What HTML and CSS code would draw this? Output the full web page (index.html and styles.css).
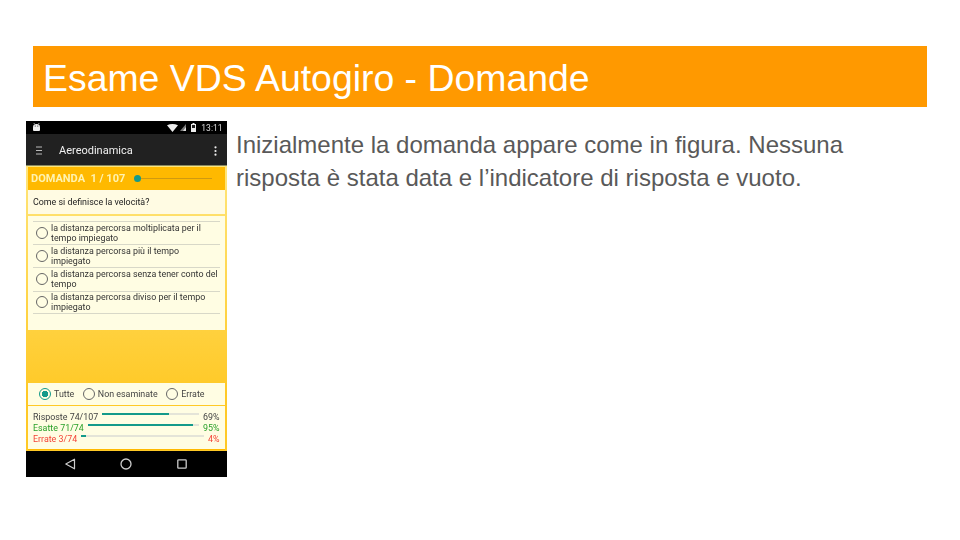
FILE: index.html
```html
<!DOCTYPE html>
<html lang="it">
<head>
    <meta charset="UTF-8">
    <title>Esame VDS Autogiro - Domande</title>
    <link rel="stylesheet" href="styles.css">
</head>
<body>
    <div class="slide">
        <h1 class="title">Esame VDS Autogiro - Domande</h1>
        <div class="content">
            <!-- schermata del telefono -->
            <div class="phone">
                <div class="status">
                    <svg class="android" width="9" height="9" viewBox="0 0 9 9"><path d="M1 4.2a3.5 3.2 0 0 1 7 0V7a1 1 0 0 1-1 1H2a1 1 0 0 1-1-1z" fill="#eee"/><path d="M2.5 1 1.8 0M6.5 1l.7-1" stroke="#eee" stroke-width=".7"/><circle cx="3.2" cy="3" r=".5" fill="#000"/><circle cx="5.8" cy="3" r=".5" fill="#000"/></svg>
                    <div class="status-right">
                        <svg width="11" height="8" viewBox="0 0 11 8"><path d="M0 1.2Q5.5-1.2 11 1.2L5.5 8z" fill="#eee"/></svg>
                        <svg width="6" height="7" viewBox="0 0 6 7"><path d="M6 0v7H0z" fill="#777"/><path d="M6 3v4H3z" fill="#ddd"/></svg>
                        <svg class="battery" width="5" height="9" viewBox="0 0 5 9"><path d="M1.500 0h2v1H5v8H0V1h1.500z" fill="#eee"/><rect x="1" y="2" width="3" height="3" fill="#222"/></svg>
                        <span class="clock">13:11</span>
                    </div>
                </div>
                <div class="toolbar">
                    <svg class="burger" width="6" height="9" viewBox="0 0 6 9"><path d="M0 1h6M0 4.500h6M0 8h6" stroke="#bbb" stroke-width="1"/></svg>
                    <span class="toolbar-title">Aereodinamica</span>
                    <svg class="dots" width="3" height="10" viewBox="0 0 3 10"><circle cx="1.500" cy="1.300" r="1.100" fill="#eee"/><circle cx="1.500" cy="5" r="1.100" fill="#eee"/><circle cx="1.500" cy="8.700" r="1.100" fill="#eee"/></svg>
                </div>
                <div class="app">
                    <div class="quiz-head">
                        <span class="quiz-label">DOMANDA&nbsp; 1 / 107</span>
                        <div class="quiz-slider"><span class="quiz-knob"></span></div>
                    </div>
                    <div class="question">Come si definisce la velocità?</div>
                    <div class="answers">
                        <div class="answer"><span class="radio"></span><span class="answer-text">la distanza percorsa moltiplicata per il tempo impiegato</span></div>
                        <div class="answer"><span class="radio"></span><span class="answer-text">la distanza percorsa più il tempo impiegato</span></div>
                        <div class="answer"><span class="radio"></span><span class="answer-text">la distanza percorsa senza tener conto del tempo</span></div>
                        <div class="answer"><span class="radio"></span><span class="answer-text">la distanza percorsa diviso per il tempo impiegato</span></div>
                    </div>
                    <div class="spacer"></div>
                    <div class="filters">
                        <span class="filter"><span class="radio on"></span>Tutte</span>
                        <span class="filter"><span class="radio"></span>Non esaminate</span>
                        <span class="filter"><span class="radio"></span>Errate</span>
                    </div>
                    <div class="stats">
                        <div class="stat"><span>Risposte 74/107</span><div class="bar"><div class="fill" style="width:69%"></div></div><span>69%</span></div>
                        <div class="stat good"><span>Esatte 71/74</span><div class="bar"><div class="fill" style="width:95%"></div></div><span>95%</span></div>
                        <div class="stat bad"><span>Errate 3/74</span><div class="bar"><div class="fill" style="width:4%"></div></div><span>4%</span></div>
                    </div>
                </div>
                <div class="navbar">
                    <svg width="12" height="12" viewBox="0 0 12 12"><path d="M10.500 1.200v9.600L1.800 6z" fill="none" stroke="#ccc" stroke-width="1.200" stroke-linejoin="round"/></svg>
                    <svg width="12" height="12" viewBox="0 0 12 12"><circle cx="6" cy="6" r="5" fill="none" stroke="#ccc" stroke-width="1.300"/></svg>
                    <svg width="12" height="12" viewBox="0 0 12 12"><rect x="1.800" y="1.800" width="8.400" height="8.400" rx=".8" fill="none" stroke="#ccc" stroke-width="1.300"/></svg>
                </div>
            </div>
            <p class="description">Inizialmente la domanda appare come in figura. Nessuna risposta è stata data e l’indicatore di risposta e vuoto.</p>
        </div>
    </div>
</body>
</html>
```

FILE: styles.css
```css
* {
    margin: 0;
    padding: 0;
    box-sizing: border-box;
}

body {
    width: 960px;
    height: 540px;
    overflow: hidden;
    background: #fff;
    font-family: "Liberation Sans", Arial, sans-serif;
}

.slide {
    padding: 46px 0 0 26px;
}

.title {
    width: 894.5px;
    height: 61px;
    margin-left: 6.5px;
    padding-left: 10.5px;
    background: #ff9900;
    color: #fff;
    font-size: 37.4px;
    font-weight: normal;
    line-height: 65px;
}

.content {
    display: flex;
    gap: 9.5px;
    margin-top: 14px;
}

.description {
    width: 640px;
    margin-top: 7px;
    color: #595959;
    font-size: 24px;
    line-height: 33px;
}

/* telefono: nel riferimento e' un'immagine scalata, quindi leggermente sfocata */
.phone {
    display: flex;
    flex-direction: column;
    flex: none;
    width: 200.5px;
    height: 356px;
    font-family: Roboto, "Liberation Sans", sans-serif;
    filter: blur(.3px);
}

.status {
    display: flex;
    align-items: center;
    justify-content: space-between;
    height: 13px;
    padding: 0 4px 0 6px;
    background: #000;
}

.status-right {
    display: flex;
    align-items: center;
    gap: 2px;
}

.battery {
    margin-left: 3px;
}

.clock {
    margin-left: 3px;
    color: #ddd;
    font-size: 8.5px;
}

.toolbar {
    display: flex;
    align-items: center;
    height: 32px;
    padding: 2px 10px 0;
    background: #212121;
    border-bottom: 1px solid #8a8a60;
}

.toolbar-title {
    flex: 1;
    margin-left: 17px;
    color: #f0f0f0;
    font-size: 11px;
}

.app {
    display: flex;
    flex-direction: column;
    flex: 1;
    padding: 0 2px 1px;
    background: linear-gradient(#ffe57a, #ffc926 80%);
}

.quiz-head {
    display: flex;
    align-items: center;
    height: 24px;
    padding-left: 3px;
    background: #ffb900;
    border-top: 1px solid #ffe57a;
}

.quiz-label {
    color: #fff3b0;
    font-size: 11px;
    font-weight: bold;
}

.quiz-slider {
    position: relative;
    width: 78px;
    height: 1px;
    margin-left: 9px;
    background: #d09a10;
}

.quiz-knob {
    position: absolute;
    top: -3px;
    left: 0;
    width: 7px;
    height: 7px;
    border-radius: 50%;
    background: #149a8a;
}

.question {
    height: 25px;
    padding-left: 5px;
    background: #fffbe3;
    border-bottom: 1px solid #ffe06a;
    color: #222;
    font-size: 8.9px;
    line-height: 24px;
}

.answers {
    height: 114px;
    margin-top: 1px;
    padding: 5px 5px 0;
    background: #fffde3;
}

.answer {
    display: flex;
    align-items: center;
    gap: 3px;
    height: 23.2px;
    padding-left: 3px;
    border-top: 1px solid #d8d8c8;
    color: #333;
    font-size: 8.9px;
    line-height: 10.5px;
}

.answer:last-child {
    height: 23.6px;
    border-bottom: 1px solid #d8d8c8;
}

.answer-text {
    width: 168px;
}

.radio {
    flex: none;
    display: inline-block;
    width: 12px;
    height: 12px;
    border: 1px solid #666;
    border-radius: 50%;
}

.radio.on {
    border-color: #149a8a;
    background: radial-gradient(circle, #149a8a 0 3px, transparent 3.5px);
}

.spacer {
    flex: 1;
}

.filters {
    display: flex;
    align-items: center;
    gap: 8.5px;
    height: 22px;
    padding-left: 11px;
    background: #fffde3;
    color: #444;
    font-size: 8.9px;
}

.filter {
    display: flex;
    align-items: center;
    gap: 3px;
}

.stats {
    height: 44px;
    margin-top: 1px;
    padding: 5px 5px 0;
    background: #fffde3;
    border-bottom: 1px solid #ffb900;
    font-size: 8.9px;
}

.stat {
    display: flex;
    align-items: center;
    gap: 4px;
    height: 11px;
    color: #444;
}

.stat.good {
    color: #2aa02a;
}

.stat.bad {
    color: #f44336;
}

.bar {
    flex: 1;
    height: 2px;
    margin-bottom: 6px;
    background: #e4e4d8;
}

.fill {
    height: 100%;
    background: #149a8a;
}

.navbar {
    display: flex;
    align-items: center;
    justify-content: space-around;
    flex: none;
    height: 26px;
    padding: 0 16px;
    background: #000;
}
```
